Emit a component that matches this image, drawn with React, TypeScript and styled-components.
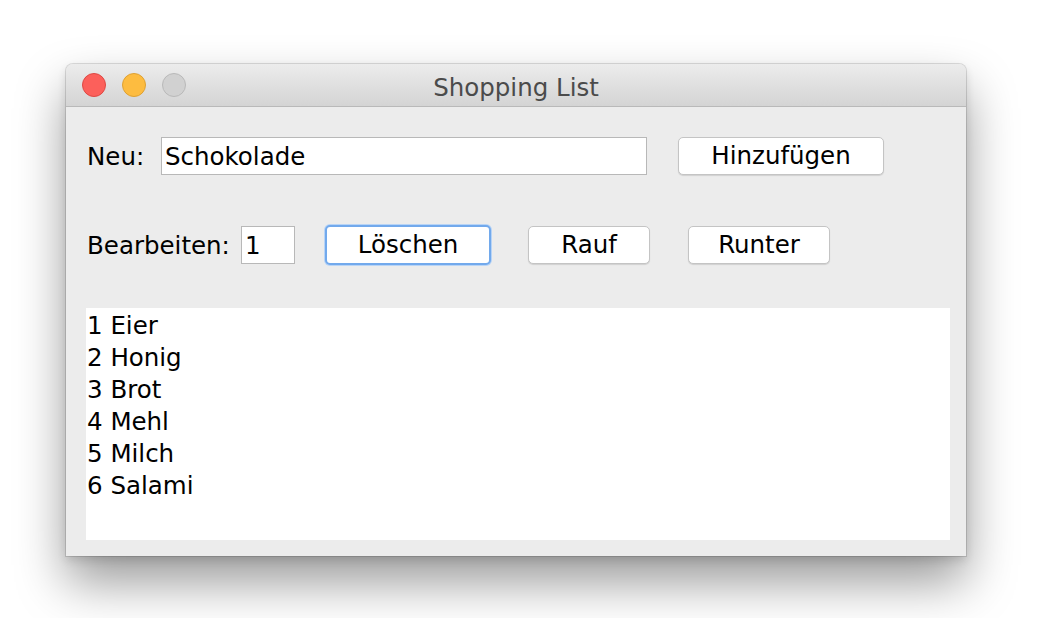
import * as React from 'react';
import styled, { createGlobalStyle } from 'styled-components';

const GlobalStyle = createGlobalStyle`
   html, body {
      margin: 0;
      padding: 0;
      background: #ffffff;
   }
   body {
      font-family: 'DejaVu Sans', 'Liberation Sans', sans-serif;
   }
`;

const items = ['1 Eier', '2 Honig', '3 Brot', '4 Mehl', '5 Milch', '6 Salami'];

const Page = styled.div`
   width: 1038px;
   height: 618px;
   padding: 64px 0 0 66px;
   box-sizing: border-box;
   overflow: hidden;
`;

const Window = styled.div`
   width: 900px;
   height: 492px;
   display: flex;
   flex-direction: column;
   background: #ececec;
   border-radius: 7px 7px 0 0;
   box-shadow:
      0 0 0 1px rgba(0, 0, 0, 0.12),
      0 26px 50px rgba(0, 0, 0, 0.4),
      0 4px 10px rgba(0, 0, 0, 0.12);
`;

const TitleBar = styled.div`
   position: relative;
   height: 42px;
   flex: none;
   display: flex;
   align-items: center;
   justify-content: center;
   border-radius: 7px 7px 0 0;
   border-bottom: 1px solid #b9b9b9;
   background: linear-gradient(#ececec, #d4d4d4);
`;

const Lights = styled.div`
   position: absolute;
   left: 16px;
   top: 9px;
   display: flex;
   gap: 16px;
`;

const Light = styled.span<{ $fill: string; $edge: string }>`
   width: 22px;
   height: 22px;
   border-radius: 50%;
   background: ${(p) => p.$fill};
   border: 1px solid ${(p) => p.$edge};
`;

const Title = styled.div`
   font-size: 24.5px;
   color: #4b4b4b;
   padding-top: 4px;
`;

const Content = styled.div`
   flex: 1;
   display: flex;
   flex-direction: column;
   padding: 29px 16px 16px 20px;
   font-size: 24.5px;
   color: #000;
`;

const Row = styled.div<{ $top?: number }>`
   display: flex;
   align-items: center;
   height: 40px;
   margin-top: ${(p) => p.$top ?? 0}px;
`;

const Label = styled.span<{ $width: number }>`
   width: ${(p) => p.$width}px;
   padding-left: 1px;
   flex: none;
`;

const Field = styled.div<{ $width: number; $gap: number }>`
   width: ${(p) => p.$width}px;
   height: 38px;
   box-sizing: border-box;
   margin-right: ${(p) => p.$gap}px;
   border: 1px solid #b8b8b8;
   background: #fff;
   display: flex;
   align-items: center;
   padding-left: 3px;
   flex: none;
`;

const Button = styled.div<{ $width: number; $gap?: number; $focus?: boolean }>`
   width: ${(p) => p.$width}px;
   height: ${(p) => (p.$focus ? 40 : 38)}px;
   box-sizing: border-box;
   margin-right: ${(p) => p.$gap ?? 0}px;
   flex: none;
   display: flex;
   align-items: center;
   justify-content: center;
   background: #fff;
   border-radius: 5px;
   border: ${(p) => (p.$focus ? '2px solid #72a9ec' : '1px solid #c4c4c4')};
   box-shadow: ${(p) =>
      p.$focus ? '0 0 0 1px #b8d4f6' : '0 1px 1px rgba(0, 0, 0, 0.12)'};
   padding-bottom: 2px;
`;

const List = styled.div`
   margin-top: 43px;
   height: 232px;
   background: #fff;
   padding: 2px 0 0 1px;
   box-sizing: border-box;
   line-height: 32px;
`;

export default function App() {
   return (
      <>
         <GlobalStyle />
         <Page>
            <Window>
               <TitleBar>
                  <Lights>
                     <Light $fill="#fc605b" $edge="#de4944" />
                     <Light $fill="#fdbc40" $edge="#dea133" />
                     <Light $fill="#d1d1d1" $edge="#b9b9b9" />
                  </Lights>
                  <Title>Shopping List</Title>
               </TitleBar>
               <Content>
                  <Row>
                     <Label $width={74}>Neu:</Label>
                     <Field $width={486} $gap={31}>
                        Schokolade
                     </Field>
                     <Button $width={206}>Hinzufügen</Button>
                  </Row>
                  <Row $top={49}>
                     <Label $width={154}>Bearbeiten:</Label>
                     <Field $width={54} $gap={30}>
                        1
                     </Field>
                     <Button $width={166} $gap={37} $focus>
                        Löschen
                     </Button>
                     <Button $width={122} $gap={38}>
                        Rauf
                     </Button>
                     <Button $width={142}>Runter</Button>
                  </Row>
                  <List>
                     {items.map((item) => (
                        <div key={item}>{item}</div>
                     ))}
                  </List>
               </Content>
            </Window>
         </Page>
      </>
   );
}
